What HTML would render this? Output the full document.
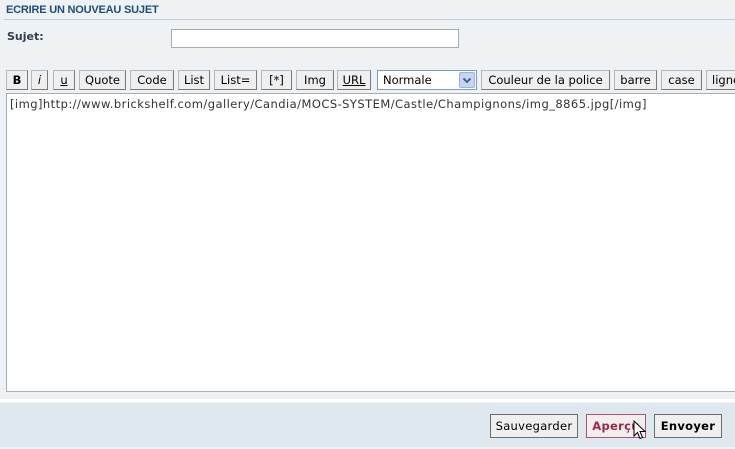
<!DOCTYPE html>
<html><head><meta charset="utf-8"><style>
*{margin:0;padding:0;box-sizing:border-box}
body{width:735px;height:449px;overflow:hidden;background:#eef2f4;font-family:"DejaVu Sans",Verdana,sans-serif;font-size:11px;color:#000;position:relative}
.a{position:absolute}
.title{left:6px;top:4px;font-family:"Liberation Sans",sans-serif;font-weight:bold;font-size:11px;color:#1d4d7a;letter-spacing:-0.2px}
.hr{left:4px;top:19px;width:731px;height:1px;background:#c5ccd2}
.lbl{left:7px;top:30px;font-weight:bold;font-size:11px;color:#323d4f}
.inp{left:171px;top:29px;width:288px;height:19px;background:#fff;border:1px solid #a5acb2}
.b{position:absolute;top:70px;height:20px;background:#efefef;border:1px solid #7a7a7a;border-top-color:#b8b8b8;border-left-color:#b8b8b8;font-size:11.5px;text-align:center;line-height:18px;color:#000;white-space:nowrap;overflow:hidden}
.sel{left:377px;top:70px;width:100px;height:20px;background:#fff;border:1px solid #7f9db9;font-size:11.5px;line-height:18px;padding-left:5px}
.arr{position:absolute;right:1px;top:1px;width:16px;height:16px;background:#c5d5f5;border:1px solid #9ab1e0;border-radius:2px}
.ta{left:6px;top:93px;width:735px;height:299px;background:#fff;border:1px solid #a8aeb3;padding:3px 3px;font-size:11.5px;color:#333;letter-spacing:0.45px;white-space:nowrap}
.wl{left:0;top:399px;width:735px;height:3px;background:#fff}
.bar{left:0;top:403px;width:735px;height:44px;background:#dfe8ef}
.fb{position:absolute;top:414px;height:24px;border:1px solid #6e6e6e;background:#efefef;font-size:11.5px;line-height:22px;text-align:center;letter-spacing:0.3px}
</style></head><body>
<div class="a title">ECRIRE UN NOUVEAU SUJET</div>
<div class="a hr"></div>
<div class="a lbl">Sujet:</div>
<div class="a inp"></div>
<div class="b" style="left:6px;width:22px;font-weight:bold">B</div>
<div class="b" style="left:31px;width:17px;font-style:italic">i</div>
<div class="b" style="left:53px;width:22px;text-decoration:underline">u</div>
<div class="b" style="left:79px;width:47px">Quote</div>
<div class="b" style="left:130px;width:44px">Code</div>
<div class="b" style="left:178px;width:32px">List</div>
<div class="b" style="left:214px;width:43px">List=</div>
<div class="b" style="left:261px;width:31px">[*]</div>
<div class="b" style="left:296px;width:38px">Img</div>
<div class="b" style="left:337px;width:34px;text-decoration:underline">URL</div>
<div class="a sel">Normale<div class="arr"><svg width="14" height="14" viewBox="0 0 14 14"><path d="M3.5 5.5 L7 9 L10.5 5.5" stroke="#4d6185" stroke-width="2" fill="none"/></svg></div></div>
<div class="b" style="left:481px;width:129px">Couleur de la police</div>
<div class="b" style="left:614px;width:43px">barre</div>
<div class="b" style="left:661px;width:41px">case</div>
<div class="b" style="left:706px;width:40px;text-align:left;padding-left:5px">ligne</div>
<div class="a ta">[img]http://www.brickshelf.com/gallery/Candia/MOCS-SYSTEM/Castle/Champignons/img_8865.jpg[/img]</div>
<div class="a wl"></div>
<div class="a bar"></div>
<div class="fb" style="left:490px;width:88px">Sauvegarder</div>
<div class="fb" style="left:586px;width:60px;border-color:#b0546e;color:#9b2a4a;font-weight:bold;background:#f2eeee">Aperçu</div>
<div class="fb" style="left:654px;width:68px;font-weight:bold">Envoyer</div>
<svg class="a" style="left:633px;top:420px" width="14" height="22" viewBox="0 0 14 22"><path d="M1 1 L1 16 L4.5 12.5 L7 18.5 L9.5 17.5 L7 11.5 L12 11.5 Z" fill="#fff" stroke="#000" stroke-width="1"/></svg>
</body></html>
